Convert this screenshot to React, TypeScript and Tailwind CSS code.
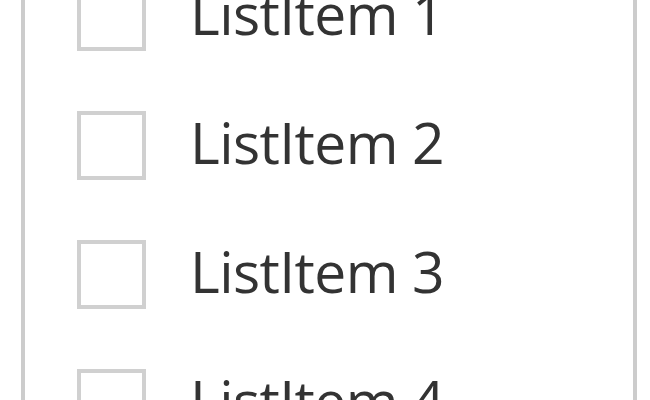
const items = ["ListItem 1", "ListItem 2", "ListItem 3", "ListItem 4"];

function ListRow({ label }: { label: string }) {
	return (
		<li className="flex h-[129px] shrink-0 items-center">
			<span className="ml-[52px] h-[69px] w-[69px] shrink-0 border-4 border-[#d0d0d0] bg-white" />
			<span className="mb-[6px] ml-[44px] text-[57px] leading-none text-[#333333] tracking-[-0.6px]">{label}</span>
		</li>
	);
}

export default function App() {
	return (
		<div className="h-[400px] w-[650px] overflow-hidden bg-white font-['Open_Sans',sans-serif]">
			<div className="ml-[21px] flex h-full w-[616px] flex-col overflow-hidden border-x-4 border-[#cccccc]">
				<ul className="-mt-[48px] flex flex-col">
					{items.map((item) => (
						<ListRow key={item} label={item} />
					))}
				</ul>
			</div>
		</div>
	);
}
